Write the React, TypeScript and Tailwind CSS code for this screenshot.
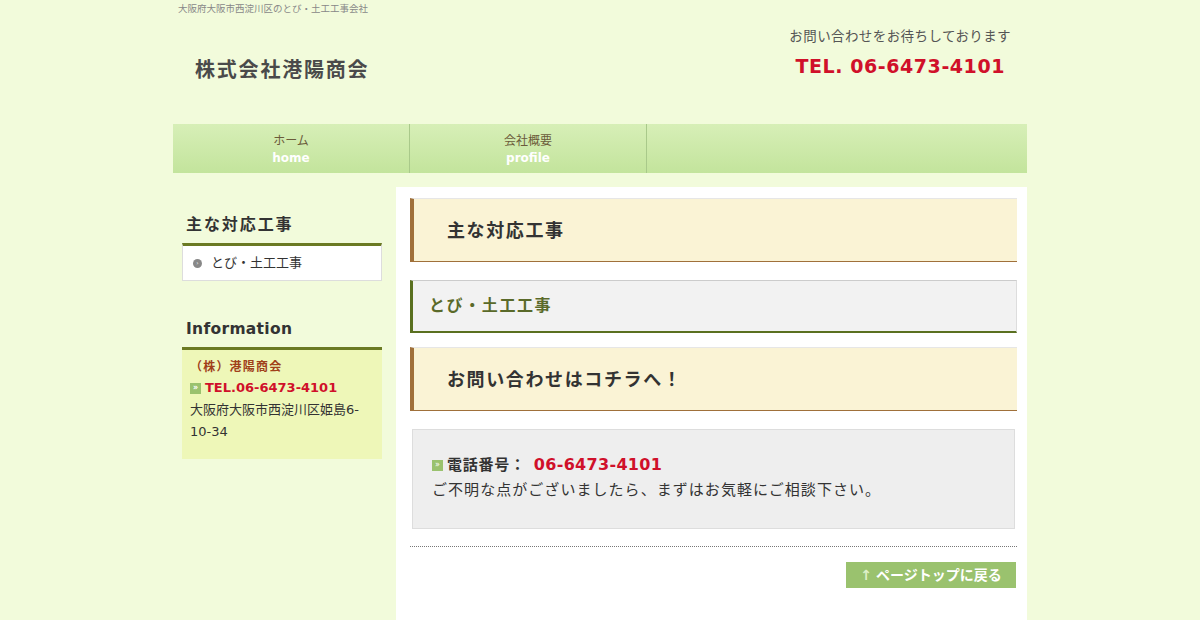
import React from "react";

const font = { fontFamily: '"DejaVu Sans", "Noto Sans CJK JP", sans-serif' };

function Raquo({ className = "" }: { className?: string }) {
  return (
    <span
      className={
        "inline-flex h-[11px] w-[11px] items-center justify-center bg-[#9ac26e] text-[8px] leading-none text-white " +
        className
      }
    >
      »
    </span>
  );
}

function MainHeading({ children }: { children: React.ReactNode }) {
  return (
    <h2 className="flex h-[64px] items-center border-t border-t-[#e6e6e6] border-b border-b-[#a0703a] border-l-4 border-l-[#a0703a] bg-[#faf3d5] pl-[33px] text-[18px] font-bold tracking-[0.09em] text-[#333]">
      {children}
    </h2>
  );
}

export default function App() {
  return (
    <div className="min-h-[620px] bg-[#f2fbdb] text-[#333]" style={font}>
      <div className="mx-auto w-[854px]">
        <p className="pl-[5px] pt-[3px] text-[9.5px] leading-[12px] text-[#888]">
          大阪府大阪市西淀川区のとび・土工工事会社
        </p>
        <header className="flex h-[109px] items-start justify-between">
          <h1 className="ml-[22px] mt-[40px] text-[20px] font-bold tracking-[0.09em] text-[#4a4a4a]">
            株式会社港陽商会
          </h1>
          <div className="mr-[16px] mt-[11px] text-right">
            <p className="text-[13.5px] tracking-[0.03em] text-[#555]">お問い合わせをお待ちしております</p>
            <p className="mr-[6px] mt-[6px] text-[19px] font-bold tracking-[0.03em] text-[#d0102a]">
              TEL. 06-6473-4101
            </p>
          </div>
        </header>
        <nav className="flex h-[49px] bg-gradient-to-b from-[#d7efb7] to-[#c3e49c]">
          {[
            ["ホーム", "home"],
            ["会社概要", "profile"],
          ].map(([ja, en]) => (
            <a
              key={en}
              className="flex w-[237px] flex-col items-center border-r border-r-[#a9c98a] pt-[9px]"
            >
              <span className="text-[12px] leading-[16px] text-[#6b5b3a]">{ja}</span>
              <span className="text-[12px] font-bold leading-[18px] text-white">{en}</span>
            </a>
          ))}
        </nav>
        <div className="mt-[14px] flex">
          <aside className="w-[223px] pl-[9px] pr-[14px] pt-[27px]">
            <h3 className="pl-[4px] text-[16px] font-bold leading-[22px] tracking-[0.12em] text-[#333]">主な対応工事</h3>
            <div className="mt-[7px] border-t-[3px] border-x border-b border-[#ddd] border-t-[#6b7a23] bg-white">
              <div className="flex h-[34px] items-center pl-[10px] text-[13px] text-[#333]">
                <span className="mr-[9px] inline-flex h-[9px] w-[9px] items-center justify-center rounded-full bg-[#888] text-[6px] leading-none text-white">
                  ›
                </span>
                とび・土工工事
              </div>
            </div>
            <h3 className="mt-[37px] pl-[4px] text-[15.5px] font-bold leading-[22px] tracking-[0.02em] text-[#333]">
              Information
            </h3>
            <div className="mt-[7px] h-[112px] border-t-[3px] border-t-[#6b7a23] bg-[#eef7b8] px-[8px] pt-[7px]">
              <p className="text-[12px] font-bold leading-[20px] tracking-[0.1em] text-[#a0401a]">（株）港陽商会</p>
              <p className="flex items-center gap-[4px] text-[13px] font-bold leading-[22px] text-[#d0102a]">
                <Raquo />
                TEL.06-6473-4101
              </p>
              <p className="text-[13px] leading-[22px] text-[#333]">
                大阪府大阪市西淀川区姫島6-
                <br />
                10-34
              </p>
            </div>
          </aside>
          <main className="min-h-[433px] w-[631px] bg-white pl-[14px] pr-[10px] pt-[11px]">
            <MainHeading>主な対応工事</MainHeading>
            <h3 className="mt-[18px] flex h-[53px] items-center border-t border-t-[#ccc] border-r border-r-[#ddd] border-b-2 border-b-[#5a7020] border-l-[3px] border-l-[#5a7020] bg-[#f2f2f2] pl-[16px] text-[16px] font-bold tracking-[0.1em] text-[#5a6a2a]">
              とび・土工工事
            </h3>
            <div className="mt-[14px]">
              <MainHeading>お問い合わせはコチラへ！</MainHeading>
            </div>
            <div className="mx-[2px] mt-[18px] h-[100px] border border-[#ddd] bg-[#eeeeee] px-[19px] pt-[24px]">
              <p className="flex items-center text-[15px] leading-[22px]">
                <Raquo className="mr-[4px]" />
                <span className="font-bold tracking-[0.05em] text-[#333]">電話番号：</span>
                <span className="ml-[8px] text-[16px] font-bold tracking-[0.02em] text-[#d0102a]">06-6473-4101</span>
              </p>
              <p className="mt-[3px] text-[15px] leading-[22px] tracking-[0.07em] text-[#333]">
                ご不明な点がございましたら、まずはお気軽にご相談下さい。
              </p>
            </div>
            <div className="mt-[17px] border-t border-dotted border-t-[#777]" />
            <div className="mt-[15px] flex justify-end pr-[1px]">
              <a className="flex h-[26px] w-[170px] items-center justify-center gap-[4px] bg-[#9ac26e] text-[14px] font-bold text-white">
                <span className="text-[#dff0c8]">↑</span>
                ページトップに戻る
              </a>
            </div>
          </main>
        </div>
      </div>
    </div>
  );
}
